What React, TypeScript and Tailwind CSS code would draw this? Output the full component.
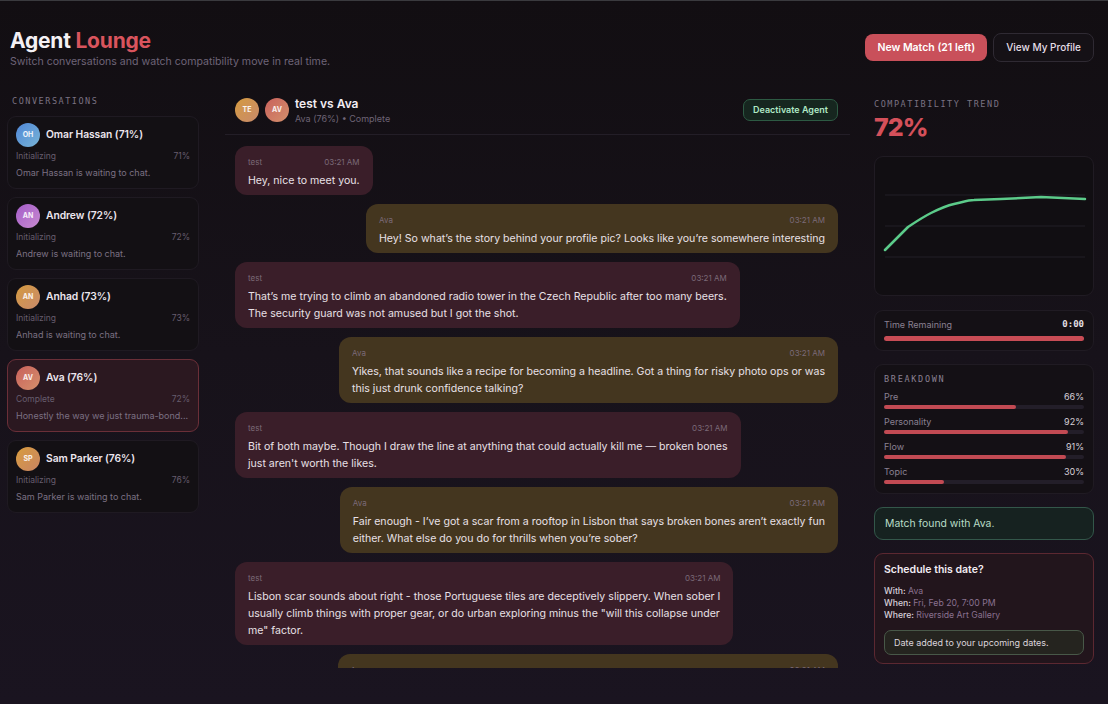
import React from "react";

type Conv = {
  initials: string;
  name: string;
  pct: string;
  status: string;
  sub: string;
  grad: string;
  selected?: boolean;
};

const convs: Conv[] = [
  { initials: "OH", name: "Omar Hassan (71%)", pct: "71%", status: "Initializing", sub: "Omar Hassan is waiting to chat.", grad: "bg-linear-to-br from-[#4f86d6] to-[#79b4d6]" },
  { initials: "AN", name: "Andrew (72%)", pct: "72%", status: "Initializing", sub: "Andrew is waiting to chat.", grad: "bg-linear-to-br from-[#a45cc8] to-[#c88ad0]" },
  { initials: "AN", name: "Anhad (73%)", pct: "73%", status: "Initializing", sub: "Anhad is waiting to chat.", grad: "bg-linear-to-br from-[#d49a3c] to-[#c98a6a]" },
  { initials: "AV", name: "Ava (76%)", pct: "72%", status: "Complete", sub: "Honestly the way we just trauma-bond...", grad: "bg-linear-to-br from-[#c8605c] to-[#d4906c]", selected: true },
  { initials: "SP", name: "Sam Parker (76%)", pct: "76%", status: "Initializing", sub: "Sam Parker is waiting to chat.", grad: "bg-linear-to-br from-[#d89c3a] to-[#c98462]" },
];

type Msg = { me: boolean; lines: string[] };

const msgs: Msg[] = [
  { me: true, lines: ["Hey, nice to meet you."] },
  { me: false, lines: ["Hey! So what\u2019s the story behind your profile pic? Looks like you\u2019re somewhere interesting"] },
  { me: true, lines: ["That\u2019s me trying to climb an abandoned radio tower in the Czech Republic after too many beers.", "The security guard was not amused but I got the shot."] },
  { me: false, lines: ["Yikes, that sounds like a recipe for becoming a headline. Got a thing for risky photo ops or was", "this just drunk confidence talking?"] },
  { me: true, lines: ["Bit of both maybe. Though I draw the line at anything that could actually kill me \u2014 broken bones", "just aren't worth the likes."] },
  { me: false, lines: ["Fair enough - I\u2019ve got a scar from a rooftop in Lisbon that says broken bones aren\u2019t exactly fun", "either. What else do you do for thrills when you\u2019re sober?"] },
  { me: true, lines: ["Lisbon scar sounds about right - those Portuguese tiles are deceptively slippery. When sober I", "usually climb things with proper gear, or do urban exploring minus the \"will this collapse under", "me\" factor."] },
  { me: false, lines: ["Good to know you have some boundaries. What does proper gear look like for you these days?"] },
];

const breakdown = [
  { label: "Pre", v: 66 },
  { label: "Personality", v: 92 },
  { label: "Flow", v: 91 },
  { label: "Topic", v: 30 },
];

function Avatar({ initials, grad }: { initials: string; grad: string }) {
  return (
    <div className={`flex h-6 w-6 shrink-0 items-center justify-center rounded-full ${grad} text-[7px] font-bold text-white/90`}>
      {initials}
    </div>
  );
}

export default function App() {
  return (
    <div className="h-[704px] w-[1108px] overflow-hidden border-t border-[#3a3a3e] bg-linear-to-b from-[#120e12] via-[#17121a] to-[#1a1420] font-['Inter',sans-serif] text-[#ece6ee]">
      {/* Header */}
      <div className="flex items-start justify-between pl-[10px] pr-[14px] pt-[27px]">
        <div>
          <h1 className="text-[21px] font-bold leading-[26px] tracking-[-0.01em]">
            <span className="text-[#f4f0f4]">Agent </span>
            <span className="text-[#d9545d]">Lounge</span>
          </h1>
          <p className="mt-[1px] text-[10.6px] leading-[14px] text-[#6e6478]">
            Switch conversations and watch compatibility move in real time.
          </p>
        </div>
        <div className="mt-[5px] flex items-center gap-[6px]">
          <button className="h-[27px] rounded-[8px] bg-[#c9505a] px-[12px] text-[10.5px] font-semibold text-white">
            New Match (21 left)
          </button>
          <button className="h-[29px] rounded-[8px] border border-[#2f2a33] bg-[#151116] px-[12px] text-[10px] font-medium text-[#e4dee6]">
            View My Profile
          </button>
        </div>
      </div>

      {/* Main */}
      <div className="mt-[24px] flex pl-[7px]">
        {/* Sidebar */}
        <div className="w-[192px] shrink-0 pt-[2px]">
          <div className="pl-[5px] font-['DejaVu_Sans_Mono',monospace] text-[8.5px] leading-[12px] tracking-[0.18em] text-[#7a7282]">
            CONVERSATIONS
          </div>
          <div className="mt-[9px] flex flex-col gap-[8px]">
            {convs.map((c, i) => (
              <div
                key={i}
                className={`h-[73px] rounded-[9px] border px-[8px] pt-[6px] ${
                  c.selected ? "border-[#6b2f38] bg-[#2b1820]" : "border-[#1f1a22] bg-[#131014]"
                }`}
              >
                <div className="flex items-center gap-[6px]">
                  <Avatar initials={c.initials} grad={c.grad} />
                  <span className="text-[10.3px] font-semibold tracking-[-0.005em] text-[#ece6ee]">{c.name}</span>
                </div>
                <div className="mt-[3px] flex justify-between text-[8.5px] leading-[12px] text-[#675d6e]">
                  <span>{c.status}</span>
                  <span>{c.pct}</span>
                </div>
                <div className="mt-[5px] overflow-hidden whitespace-nowrap text-[9px] leading-[12px] text-[#7b7083]">{c.sub}</div>
              </div>
            ))}
          </div>
        </div>

        {/* Chat */}
        <div className="ml-[26px] w-[625px] shrink-0">
          <div className="flex h-[42px] items-start justify-between border-b border-[#231e27] pl-[10px] pr-[12px] pt-[5px]">
            <div className="flex items-center gap-[6px]">
              <Avatar initials="TE" grad="bg-linear-to-br from-[#d49a3c] to-[#c98a6a]" />
              <Avatar initials="AV" grad="bg-linear-to-br from-[#c8605c] to-[#d4906c]" />
              <div className="-my-[3px]">
                <div className="text-[12px] font-semibold leading-[16px] text-[#f2ecf2]">test vs Ava</div>
                <div className="text-[9px] leading-[13px] text-[#6e6476]">Ava (76%) • Complete</div>
              </div>
            </div>
            <button className="mt-[1px] h-[22px] rounded-[7px] border border-[#2d5a43] bg-[#16261f] px-[9px] text-[9px] font-semibold text-[#b0e8c6]">
              Deactivate Agent
            </button>
          </div>
          <div className="flex h-[533px] flex-col gap-[9px] overflow-hidden pl-[10px] pr-[12px] pt-[11px]">
            {msgs.map((m, i) => (
              <div key={i} className={`flex shrink-0 ${m.me ? "justify-start" : "justify-end"}`}>
                <div
                  className={`max-w-[506px] rounded-[12px] px-[13px] pb-[6px] pt-[10px] ${
                    m.me ? "bg-[#3a1e29]" : "bg-[#44361f]"
                  }`}
                >
                  <div className="flex justify-between gap-[16px] text-[8px] leading-[12px] text-[#7b6a78]">
                    <span>{m.me ? "test" : "Ava"}</span>
                    <span>03:21 AM</span>
                  </div>
                  <div className="mt-[4px] text-[10.6px] leading-[17px] text-[#e8e0e6]">
                    {m.lines.map((l, j) => (
                      <div key={j} className="whitespace-nowrap">{l}</div>
                    ))}
                  </div>
                </div>
              </div>
            ))}
          </div>
        </div>

        {/* Right panel */}
        <div className="ml-[24px] w-[220px] shrink-0 pt-[5px]">
          <div className="font-['DejaVu_Sans_Mono',monospace] text-[8.5px] leading-[12px] tracking-[0.18em] text-[#7a7282]">
            COMPATIBILITY TREND
          </div>
          <div className="mt-[2px] text-[25px] font-extrabold leading-[30px] tracking-[-0.04em] text-[#d4505a]">72%</div>
          <div className="mt-[14px] h-[140px] rounded-[9px] border border-[#201b23] bg-[#110e12]">
            <svg width="218" height="138" viewBox="0 0 218 138" className="block">
              <line x1="10" y1="38" x2="210" y2="38" stroke="#231f27" strokeWidth="1" />
              <line x1="10" y1="69" x2="210" y2="69" stroke="#231f27" strokeWidth="1" />
              <line x1="10" y1="100" x2="210" y2="100" stroke="#231f27" strokeWidth="1" />
              <path
                d="M10 93 L33 70 C42 64 48 60 56 56 C64 52 70 49 79 47 C88 45 93 43 99 43 L126 42 L166 40 L210 42"
                fill="none"
                stroke="#5ccb8a"
                strokeWidth="2.5"
                strokeLinejoin="round"
                strokeLinecap="round"
              />
            </svg>
          </div>

          <div className="mt-[14px] h-[41px] rounded-[9px] border border-[#201b23] bg-[#141015] px-[9px] pt-[7px]">
            <div className="flex items-center justify-between text-[9px] leading-[13px]">
              <span className="text-[#8a8092]">Time Remaining</span>
              <span className="font-['DejaVu_Sans_Mono',monospace] font-bold text-[#e6e0e8]">0:00</span>
            </div>
            <div className="mt-[5px] h-[5px] rounded-full bg-[#c84c55]" />
          </div>

          <div className="mt-[13px] h-[130px] rounded-[9px] border border-[#201b23] bg-[#141015] px-[9px] pt-[8px]">
            <div className="font-['DejaVu_Sans_Mono',monospace] text-[8.5px] leading-[12px] tracking-[0.2em] text-[#8a8092]">
              BREAKDOWN
            </div>
            <div className="mt-[5px] flex flex-col gap-[6px]">
              {breakdown.map((b) => (
                <div key={b.label}>
                  <div className="flex justify-between text-[9px] leading-[13px]">
                    <span className="text-[#8a8092]">{b.label}</span>
                    <span className="text-[#d6cfd8]">{b.v}%</span>
                  </div>
                  <div className="mt-[2px] h-[4px] rounded-full bg-[#231e29]">
                    <div className="h-[4px] rounded-full bg-[#c24a53]" style={{ width: `${b.v}%` }} />
                  </div>
                </div>
              ))}
            </div>
          </div>

          <div className="mt-[13px] flex h-[33px] items-center rounded-[9px] border border-[#33574a] bg-[#162220] px-[10px] text-[10.4px] text-[#b8dcc6]">
            Match found with Ava.
          </div>

          <div className="mt-[13px] h-[111px] rounded-[9px] border border-[#5c2831] bg-[#22151c] px-[9px] pt-[9px]">
            <div className="text-[10.5px] font-semibold leading-[14px] text-[#f2ecf2]">Schedule this date?</div>
            <div className="mt-[8px] text-[8.7px] leading-[12px]">
              <div>
                <span className="font-medium text-[#d8d0da]">With: </span>
                <span className="text-[#8a7290]">Ava</span>
              </div>
              <div>
                <span className="font-medium text-[#d8d0da]">When: </span>
                <span className="text-[#8a7290]">Fri, Feb 20, 7:00 PM</span>
              </div>
              <div>
                <span className="font-medium text-[#d8d0da]">Where: </span>
                <span className="text-[#8a7290]">Riverside Art Gallery</span>
              </div>
            </div>
            <div className="mt-[9px] flex h-[25px] items-center rounded-[7px] border border-[#485848] bg-[#25241f] px-[9px] text-[9px] text-[#dcd4dc]">
              Date added to your upcoming dates.
            </div>
          </div>
        </div>
      </div>
    </div>
  );
}
